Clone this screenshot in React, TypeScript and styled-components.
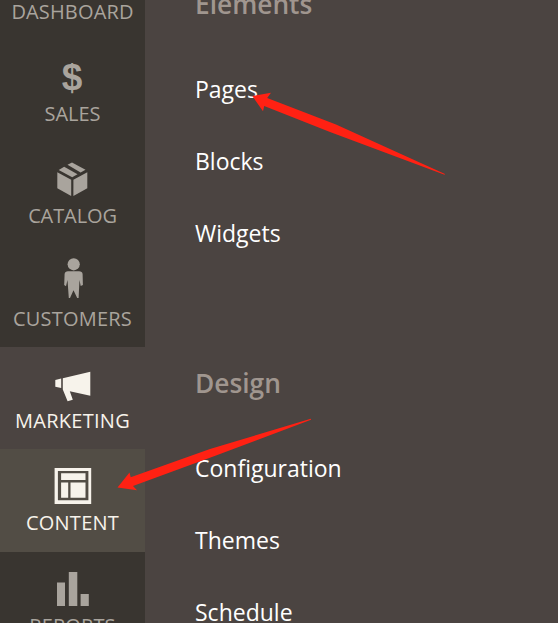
import React from 'react';
import styled, { createGlobalStyle } from 'styled-components';

const GlobalStyle = createGlobalStyle`
  *, *::before, *::after { box-sizing: border-box; }
  html, body, #root { height: 100%; margin: 0; }
  body { overflow: hidden; font-family: "Open Sans", "Noto Sans", sans-serif; background: #4b4441; }
`;

const Layout = styled.div`
  position: relative;
  display: flex;
  width: 558px;
  height: 623px;
  overflow: hidden;
  background: #4b4441;
`;

const Sidebar = styled.nav`
  flex: none;
  width: 145px;
  height: 623px;
  overflow: hidden;
  background: #393530;
`;

const SidebarList = styled.ul`
  margin: -62.5px 0 0;
  padding: 0;
  list-style: none;
`;

type Tone = 'idle' | 'open' | 'current';
const backgrounds: Record<Tone, string> = { idle: '#393530', open: '#4b4441', current: '#524d45' };

const SidebarItem = styled.li<{ $tone: Tone }>`
  display: flex;
  flex-direction: column;
  align-items: center;
  height: 102.35px;
  padding-top: 18px;
  background: ${p => backgrounds[p.$tone]};
  color: ${p => (p.$tone === 'idle' ? '#a9a49d' : '#f7f3eb')};
`;

const Icon = styled.svg`
  display: block;
  flex: none;
  width: 48px;
  height: 44px;
  margin-right: 2px;
  fill: currentColor;
`;

const Label = styled.span<{ $spacing: number }>`
  font-size: 20px;
  line-height: 24px;
  white-space: nowrap;
  letter-spacing: ${p => p.$spacing}px;
`;

const Submenu = styled.main`
  flex: 1;
  padding: 0 0 0 50px;
`;

const Group = styled.section`
  height: 378.5px;
  &:first-child { margin-top: -14px; }
`;

const GroupTitle = styled.h2`
  margin: 0 0 31px;
  color: #a0968f;
  font-size: 26.3px;
  font-weight: 600;
  line-height: 36px;
`;

const SubmenuLink = styled.a`
  display: block;
  height: 72px;
  color: #fff;
  font-size: 23px;
  line-height: 72px;
  white-space: nowrap;
`;

const Annotations = styled.svg`
  position: absolute;
  inset: 0;
  pointer-events: none;
`;

const DollarGlyph = styled.text`
  font-family: "Liberation Sans", sans-serif;
  font-size: 37px;
  font-weight: 700;
  text-anchor: middle;
`;

interface Entry { label: string; tone: Tone; spacing: number; icon: React.ReactNode }

const entries: Entry[] = [
  { label: 'DASHBOARD', tone: 'idle', spacing: 0.15, icon: null },
  { label: 'SALES', tone: 'idle', spacing: 0, icon: <DollarGlyph x="24" y="32.4">$</DollarGlyph> },
  {
    label: 'CATALOG', tone: 'idle', spacing: -0.1,
    icon: (
      <>
        <path d="M19.5 4.7 24 2.5 37.5 9.8 32.6 12.5Z" />
        <path d="M10.7 9.9 16.2 6.7 29.5 14.3 24.2 17.2Z" />
        <path d="M9.3 12.3 23.2 19.8V36L9.3 28.3Z" />
        <path d="M39.3 12.3 25.4 19.8V36L39.3 28.3Z" />
      </>
    ),
  },
  {
    label: 'CUSTOMERS', tone: 'idle', spacing: 0.2,
    icon: (
      <>
        <circle cx="25.7" cy="1.3" r="6.1" />
        <path d="M20 8.2H31Q34.3 8.2 34.6 11L34.9 22 32.7 23 31.5 17 30.6 35H29.2L25.5 27.3 22 35H20.8L19.5 17 18 23.3 16.2 22 16.6 11Q17 8.2 20 8.2Z" />
      </>
    ),
  },
  {
    label: 'MARKETING', tone: 'open', spacing: 0.28,
    icon: (
      <>
        <path d="M7.3 15 13.2 13.6V23L7.3 21.8Z" />
        <path d="M14.8 13.3 42.3 6.8V30.8L21.8 26.2 24.8 34.7 19.6 36.2 14.8 24.5Z" />
      </>
    ),
  },
  {
    label: 'CONTENT', tone: 'current', spacing: 0.25,
    icon: (
      <path fillRule="evenodd" d="M6.6 .9H43.2V37H6.6ZM9.9 3.9V33.2H40.4V3.9ZM13.1 6.3H37.5V13H13.1ZM13.1 15.6H20.2V30.8H13.1ZM22.5 15.6H37.5V30.8H22.5Z" />
    ),
  },
  {
    label: 'REPORTS', tone: 'idle', spacing: 0.15,
    icon: <path d="M9 12.5H17V36H9ZM20.8 2H29.3V36H20.8ZM32.6 24H40.8V36H32.6Z" />,
  },
];

const groups = [
  { title: 'Elements', links: ['Pages', 'Blocks', 'Widgets'] },
  { title: 'Design', links: ['Configuration', 'Themes', 'Schedule'] },
];

export default function App() {
  return (
    <>
      <GlobalStyle />
      <Layout>
        <Sidebar>
          <SidebarList>
            {entries.map(e => (
              <SidebarItem key={e.label} $tone={e.tone}>
                <Icon viewBox="0 0 48 44" overflow="visible">{e.icon}</Icon>
                <Label $spacing={e.spacing}>{e.label}</Label>
              </SidebarItem>
            ))}
          </SidebarList>
        </Sidebar>
        <Submenu>
          {groups.map(g => (
            <Group key={g.title}>
              <GroupTitle>{g.title}</GroupTitle>
              {g.links.map(l => <SubmenuLink key={l}>{l}</SubmenuLink>)}
            </Group>
          ))}
        </Submenu>
        <Annotations width="558" height="623" viewBox="0 0 558 623" fill="#ff2113">
          <path d="M252.3 96 271 92.8 267.2 98 336 124.5 445 174 444.5 174.8 330 132 264.2 106 263 111.3Z" />
          <path d="M117.5 487.5 129.5 472.5 130.7 477.3 210 449 310.8 418.8 311 419.8 216 455.5 133 486 137 490.3Z" />
        </Annotations>
      </Layout>
    </>
  );
}
